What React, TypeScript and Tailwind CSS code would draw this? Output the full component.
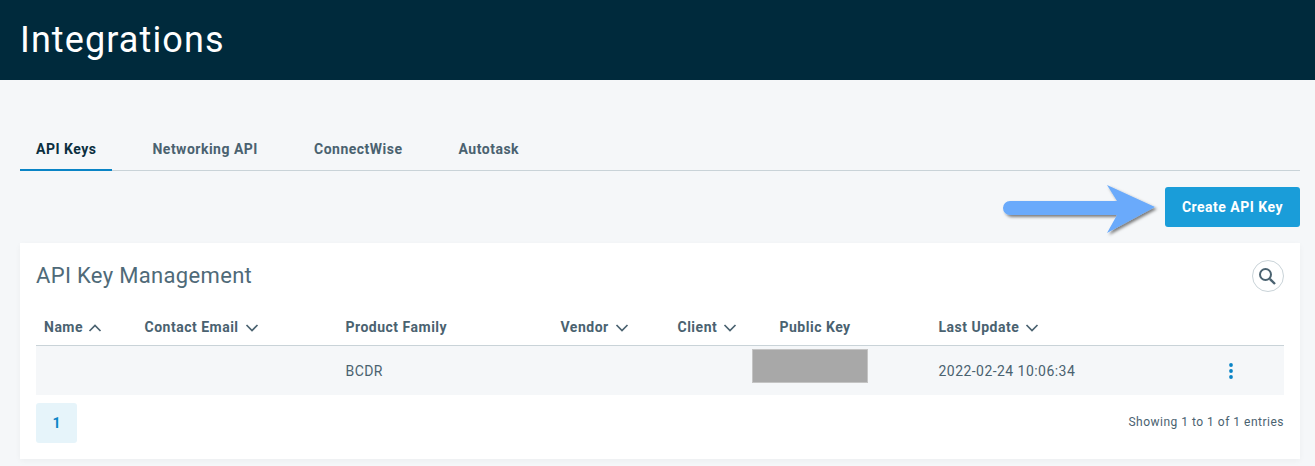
import React from "react";

const Chev = ({ up = false }: { up?: boolean }) => (
  <svg width="14" height="8" viewBox="0 0 14 8" fill="none" stroke="#4a6270" strokeWidth="1.7" className={up ? "ml-[5px]" : "ml-[6px]"}>
    <path d={up ? "M1.5 7L7 1.5L12.5 7" : "M1.5 1L7 6.5L12.5 1"} />
  </svg>
);

const Head = ({ label, chev, up }: { label: string; chev?: boolean; up?: boolean }) => (
  <div className="flex items-center pl-2 whitespace-nowrap">
    <span>{label}</span>
    {chev && <Chev up={up} />}
  </div>
);

export default function App() {
  return (
    <div className="w-[1315px] h-[466px] overflow-hidden bg-[#f5f7f9] font-['Roboto',sans-serif] text-[#4a6270]">
      <header className="h-20 bg-[#002a3c] flex items-center px-5">
        <h1 className="text-[36px] text-white tracking-[1.1px] leading-none">Integrations</h1>
      </header>

      <div className="pl-5 pr-[15px] pt-[48px]">
        <nav className="flex gap-6 h-[43px] border-b border-[#c9d3d8] text-[14px] font-bold tracking-[0.5px]">
          <div className="px-4 h-[43px] pt-[11px] border-b-2 border-[#0a84c6] text-[#0b2f40]">API Keys</div>
          <div className="px-4 pt-[11px]">Networking API</div>
          <div className="px-4 pt-[11px]">ConnectWise</div>
          <div className="px-4 pt-[11px]">Autotask</div>
        </nav>

        <div className="flex justify-end items-center gap-[7px] h-10 mt-4 relative">
          <svg width="160" height="54" viewBox="0 0 160 54" className="block" style={{ overflow: "visible" }}>
            <defs>
              <filter id="sh" x="-10%" y="-20%" width="120%" height="150%">
                <feDropShadow dx="2" dy="2" stdDeviation="1.6" floodColor="#000" floodOpacity="0.5" />
              </filter>
            </defs>
            <path
              d="M12 21H119L109 5L157 27L109 53L119 35H12A7 7 0 0 1 12 21Z"
              fill="#6aaafb"
              filter="url(#sh)"
            />
          </svg>
          <button className="w-[135px] h-10 rounded-[3px] bg-[#1a9dd9] text-white text-[14px] font-bold tracking-[0.5px]">
            Create API Key
          </button>
        </div>

        <section className="mt-4 h-[216px] bg-white px-4 shadow-[0_2px_6px_rgba(0,0,0,0.04)]">
          <div className="flex items-center justify-between h-[66px]">
            <h2 className="text-[22px] tracking-[0.33px] leading-none text-[#4f6a78]">API Key Management</h2>
            <div className="w-8 h-8 rounded-full border border-[#c9d3d8] flex items-center justify-center">
              <svg width="19" height="19" viewBox="0 0 19 19" fill="none" stroke="#4a6270" strokeWidth="2" className="-ml-[1px]">
                <circle cx="7.5" cy="7.5" r="5.5" />
                <path d="M11.8 11.8L17 17" strokeWidth="2.4" />
              </svg>
            </div>
          </div>

          <div className="grid grid-cols-[100.5px_201px_215px_117px_102px_159px_1fr] items-center h-[37px] pt-[1px] border-b border-[#c9d3d8] text-[14px] font-bold tracking-[0.5px]">
            <Head label="Name" chev up />
            <Head label="Contact Email" chev />
            <Head label="Product Family" />
            <Head label="Vendor" chev />
            <Head label="Client" chev />
            <Head label="Public Key" />
            <Head label="Last Update" chev />
          </div>

          <div className="relative grid grid-cols-[100.5px_201px_215px_117px_102px_159px_1fr] items-center h-[49px] pt-[2px] bg-[#f5f7f9] text-[14px] tracking-[0.45px]">
            <div />
            <div />
            <div className="pl-2">BCDR</div>
            <div />
            <div />
            <div />
            <div className="flex items-center justify-between pl-2 pr-[50px]">
              <span>2022-02-24 10:06:34</span>
              <svg width="6" height="16" viewBox="0 0 6 16" fill="#0a84c6" className="-mt-[2px]">
                <circle cx="3" cy="2" r="1.9" />
                <circle cx="3" cy="8" r="1.9" />
                <circle cx="3" cy="14" r="1.9" />
              </svg>
            </div>
            <div className="absolute left-[716px] top-[3px] w-[116px] h-[34px] bg-[#a8a8a8] border border-[#c4c4c4]" />
          </div>

          <div className="flex items-center justify-between mt-2">
            <div className="w-[41px] h-10 rounded-[3px] bg-[#e6f4fa] flex items-center justify-center text-[14px] font-bold text-[#0a84c6]">
              1
            </div>
            <div className="text-[12px] tracking-[0.5px] -mt-[2px]">Showing 1 to 1 of 1 entries</div>
          </div>
        </section>
      </div>
    </div>
  );
}
